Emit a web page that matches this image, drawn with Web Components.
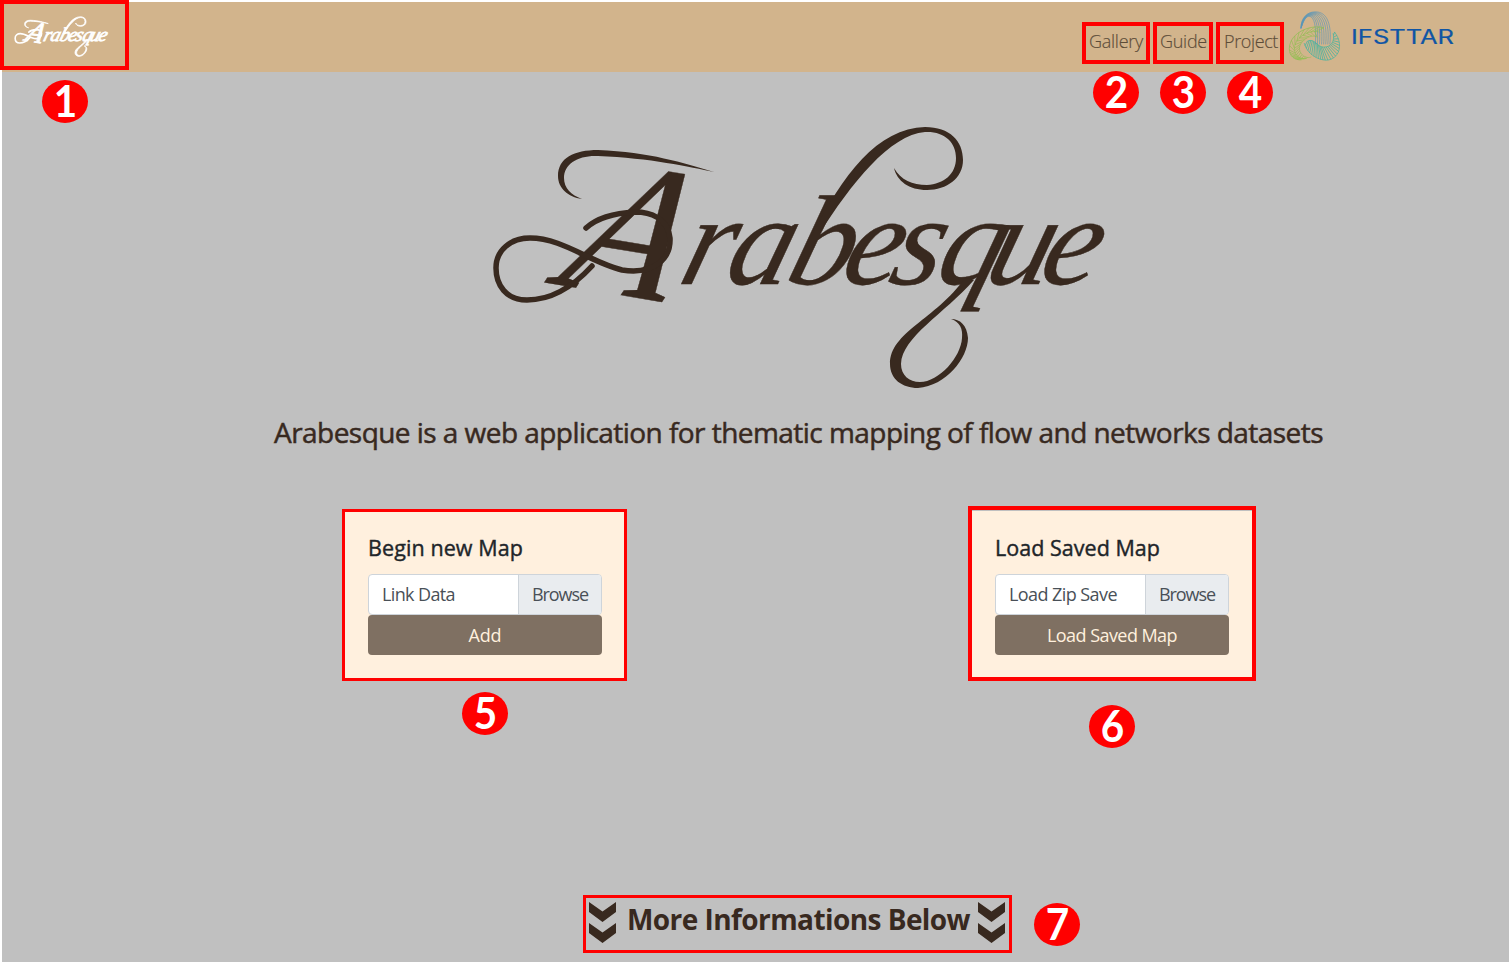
<!DOCTYPE html>
<html lang="en">
<head>
<meta charset="utf-8">
<title>Arabesque</title>
<style>
html,body{margin:0;height:100%;overflow:hidden;background:#fff}
body{font-family:"Open Sans","Noto Sans",sans-serif}
</style>
</head>
<body>
<arabesque-home></arabesque-home>
<script>
const define=(name,html,setup)=>customElements.define(name,class extends HTMLElement{
  connectedCallback(){
    if(this.shadowRoot)return;
    const r=this.attachShadow({mode:'open'});
    const t=document.createElement('template');
    t.innerHTML=typeof html==='function'?html(this):html;
    r.append(t.content.cloneNode(true));
    if(setup)setup(this,r);
  }
});

/* One line of text tracked to an exact width */
define('tracked-text',`<style>:host{display:block;white-space:nowrap}span{display:inline-block}</style><span><slot></slot></span>`,
 (el,r)=>{
  const s=r.querySelector('span'),w=+el.getAttribute('width'),n=el.textContent.length;
  el.style.width=w+'px';
  requestAnimationFrame(()=>{s.style.letterSpacing=((w-s.getBoundingClientRect().width)/n)+'px'});
 });

/* Wordmark: text with ornamental flourishes */
define('word-mark',`<style>
:host{display:block}svg{display:block;width:100%;height:100%;overflow:visible}
text{font-family:"Liberation Serif",serif;font-style:italic;fill:currentColor;stroke:currentColor;stroke-width:var(--ink,.4)}
path{fill:none;stroke:currentColor;stroke-linecap:round;stroke-width:calc(5.5px + var(--extra,0px))}
.f{fill:currentColor;stroke-width:var(--extra,0px)}
</style>
<svg viewBox="490 122 616 270">
<g transform="translate(0 284) skewX(-16)"><text y="0" x="554 676 722 783 838 886 933 982 1036" rotate="9 0"><tspan font-size="188">A</tspan><tspan font-size="128">rabesque</tspan></text></g>
<path class="f" d="M582 199C568 197 558 188 558 176C558 158 574 150 598 150C650 152 683 163 714 172C690 167 650 158 598 156C578 155 564 164 564 178C564 188 571 195 582 199Z"/>
<path d="M592 266C570 290 548 300 527 300C506 300 496 285 496 268C496 250 511 238 530 238C562 238 590 262 622 270C655 275 671 258 670 238C668 218 650 212 635 212C615 213 597 218 586 228"/>
<path class="f" d="M812 236C842 175 878 128 925 127C950 127 963 141 963 160C963 178 947 190 927 190C909 190 897 181 894 168C901 180 912 185 927 185C944 184 956 174 956 158C956 142 944 131 925 132C890 135 852 182 818 236Z"/>
<path class="f" d="M965 278C935 320 890 332 890 364C890 379 902 388 918 388C946 386 968 358 968 338C967 325 960 319 951 319C960 322 963 329 962 338C961 357 939 382 920 382C909 382 901 375 901 364C902 337 944 314 974 280Z"/>
</svg>`);

/* Three-lobed line emblem */
define('ifsttar-logo',`<style>
:host{display:flex;align-items:center}
svg{display:block;fill:none;overflow:visible}
.name{margin:2px 0 0 10px}
text{font:400 19.500px Inter,sans-serif;fill:#0f55a5;stroke:#0f55a5;stroke-width:.2px}
</style>
<svg class="emblem" width="52" height="50" viewBox="26 31 158 151"></svg>
<svg class="name" width="103" height="20" viewBox="0 0 103 20"><text x="0" y="17" textLength="103" lengthAdjust="spacingAndGlyphs">IFSTTAR</text></svg>`,
 (el,r)=>{
  const svg=r.querySelector('.emblem'),NS='http://www.w3.org/2000/svg';
  const draw=(d,c,w=2)=>{const p=document.createElementNS(NS,'path');p.setAttribute('d',d);p.setAttribute('stroke',c);p.setAttribute('stroke-width',w);svg.append(p)};
  const mix=(a,b,t)=>a.map((v,i)=>v+(b[i]-v)*t);
  const curve=p=>`M${p[0]} ${p[1]}C${p.slice(2,8).join(' ')} ${p.slice(8).join(' ')}`;
  const at=(p,t)=>{let s=t<.5?p.slice(0,8):p.slice(6),u=t<.5?t*2:t*2-1,v=1-u;
    return [0,1].map(k=>v*v*v*s[k]+3*v*v*u*s[k+2]+3*v*u*u*s[k+4]+u*u*u*s[k+6])};
  const blue=[[62,85,62,50,82,33,106,33,144,33,156,75,150,132],[64,78,74,50,82,44,92,48,108,56,108,98,106,132]];
  for(let i=0;i<8;i++)draw(curve(mix(blue[0],blue[1],i/7)),'#5795b8',1.9);
  const green=[[132,82,100,70,28,92,27,145,27,169,44,180,64,179],[112,110,90,98,62,122,58,140,54,162,80,178,94,170]];
  draw(curve(green[0]),'#85bd4d');draw(curve(green[1]),'#85bd4d',1.5);draw(curve(mix(green[0],green[1],.5)),'#85bd4d',1.5);
  for(let i=0;i<16;i++){const t=i/17,a=at(green[0],t),b=at(green[1],t),m=at(mix(green[0],green[1],.5),Math.min(1,t+.1));
    draw(`M${a}L${m}L${b}`,'#8fc04c',2)}
  const teal=[[72,128,82,163,115,180,140,180,178,178,194,132,164,94],[82,122,104,112,112,140,130,140,154,142,166,122,160,98]];
  draw(curve(teal[0]),'#3cb3a1',2);draw(curve(teal[1]),'#3cb3a1',2);
  for(let i=0;i<23;i++){const t=i/23;draw(`M${at(teal[1],t)}L${at(teal[0],Math.min(1,t+.04))}`,'#3cb3a1',2.2)}
 });

define('nav-link',`<style>:host{display:block;font-size:18px;line-height:26px;font-weight:300;color:#5c4c38;-webkit-text-stroke:.15px #5c4c38}</style><slot></slot>`);

define('site-header',`<style>
:host{display:flex;height:70px;background:#d2b48c;box-sizing:border-box;padding:0 55px 0 12px;align-items:flex-start}
word-mark{width:94px;height:41px;margin-top:14px;color:#fff;--ink:5;--extra:5px}
nav{display:flex;margin:26px 0 0 auto;gap:17px}
ifsttar-logo{margin:9px 0 0 11px}
</style>
<word-mark></word-mark>
<nav><nav-link><tracked-text width="54">Gallery</tracked-text></nav-link><nav-link><tracked-text width="47">Guide</tracked-text></nav-link><nav-link><tracked-text width="54">Project</tracked-text></nav-link></nav>
<ifsttar-logo></ifsttar-logo>`);

define('file-picker',`<style>
:host{display:flex;height:41px;box-sizing:border-box;border:1px solid #ced4da;border-radius:4px;overflow:hidden;background:#fff;font-size:18px;line-height:39px;color:#495057;font-weight:400}
.value{flex:1;padding-left:13px}
.browse{width:69px;padding-left:13px;background:#e9ecef;border-left:1px solid #ced4da}
</style><div class="value"><slot></slot></div><div class="browse"><tracked-text width="56">Browse</tracked-text></div>`);

define('map-card',`<style>
:host{display:block;box-sizing:border-box;width:282px;height:170px;padding:22px 24px 0;background:#fff0de}
h2{margin:0 0 11px;font-size:21.5px;line-height:30px;font-weight:500;color:#212529;-webkit-text-stroke:.4px #212529}
button{display:flex;justify-content:center;align-items:center;width:100%;height:40px;border:0;border-radius:4px;background:#7f7062;color:#fff0de;font:400 18px "Open Sans",sans-serif;padding:0}
</style>
<h2><slot name="title"></slot></h2><file-picker><slot name="file"></slot></file-picker><button><slot name="action"></slot></button>`);

define('double-chevron',`<style>:host{display:block;width:27px;height:41px}svg{display:block}</style>
<svg width="27" height="41" viewBox="0 0 27 41" fill="#38291f"><path d="M0 0L13.5 9.5L27 0V10L13.5 20L0 10ZM0 21L13.5 30.500L27 21V31L13.5 41L0 31Z"/></svg>`);

define('more-info',`<style>
:host{display:flex;align-items:flex-start;color:#38291f;font-weight:700;font-size:28px;line-height:36px}
tracked-text{margin:-1px 8px 0 11px}
</style><double-chevron></double-chevron><tracked-text width="343">More Informations Below</tracked-text><double-chevron></double-chevron>`);

/* Numbered badge and frame lie over the page */
define('step-badge',e=>`<style>
:host{position:absolute;left:${e.getAttribute('x')}px;top:${e.getAttribute('y')}px;width:46px;height:43px;border-radius:50%;background:red;color:#fff;display:flex;align-items:center;justify-content:center;font:700 43px/41px Lato,sans-serif}
span{transform:translateY(-1px) scaleX(.94)}
</style><span><slot></slot></span>`);
define('step-frame',e=>{const [x,y,w,h,b]=e.getAttribute('box').split(' ');return `<style>
:host{position:absolute;box-sizing:border-box;left:${x}px;top:${y}px;width:${w}px;height:${h}px;border:${b}px solid red}
</style>`});

define('arabesque-home',`<style>
:host{display:block;position:relative;box-sizing:border-box;width:1509px;height:962px;padding:2px 0 0 2px;background:#fff;overflow:hidden}
main{display:flex;flex-direction:column;height:890px;background:#c0c0c0;color:#38291f}
.hero{width:616px;height:270px;margin:50px 0 0 488px}
h1{margin:21px 0 0 272px;font-size:28px;line-height:38px;font-weight:500;-webkit-text-stroke:.5px #38291f}
.cards{display:flex;gap:345px;margin:60px 0 0 342px}
more-info{margin:221px 0 0 587px}
</style>
<site-header></site-header>
<main>
<word-mark class="hero"></word-mark>
<h1><tracked-text width="1049">Arabesque is a web application for thematic mapping of flow and networks datasets</tracked-text></h1>
<div class="cards">
<map-card><tracked-text slot="title" width="155">Begin new Map</tracked-text><tracked-text slot="file" width="73">Link Data</tracked-text><tracked-text slot="action" width="33">Add</tracked-text></map-card>
<map-card><tracked-text slot="title" width="165">Load Saved Map</tracked-text><tracked-text slot="file" width="108">Load Zip Save</tracked-text><tracked-text slot="action" width="130">Load Saved Map</tracked-text></map-card>
</div>
<more-info></more-info>
</main>
<step-frame box="0 0 129 70 4"></step-frame>
<step-frame box="1082 22 68 42 4"></step-frame>
<step-frame box="1153 22 60 42 4"></step-frame>
<step-frame box="1216 22 68 42 4"></step-frame>
<step-frame box="342 509 285 172 3"></step-frame>
<step-frame box="968 506 288 175 4"></step-frame>
<step-frame box="583 895 429 58 3"></step-frame>
<step-badge x="42" y="80">1</step-badge>
<step-badge x="1093" y="71">2</step-badge>
<step-badge x="1160" y="71">3</step-badge>
<step-badge x="1227" y="71">4</step-badge>
<step-badge x="462" y="692">5</step-badge>
<step-badge x="1089" y="705">6</step-badge>
<step-badge x="1034" y="903">7</step-badge>`);
</script>
</body>
</html>
